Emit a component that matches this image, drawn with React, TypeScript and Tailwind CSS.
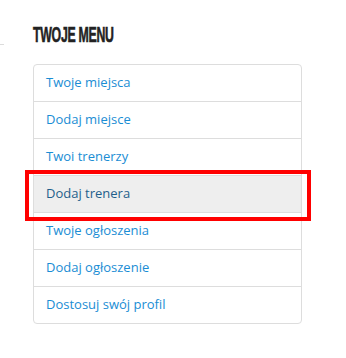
const items = [
  'Twoje miejsca',
  'Dodaj miejsce',
  'Twoi trenerzy',
  'Dodaj trenera',
  'Twoje ogłoszenia',
  'Dodaj ogłoszenie',
  'Dostosuj swój profil',
];

const ACTIVE = 'Dodaj trenera';

export default function App() {
  return (
    <div className="flex h-[358px] w-[346px] bg-white">
      {/* leftover rule from the neighbouring column */}
      <div className="w-[4px] pt-[44px]">
        <div className="h-px bg-[#dcdcdc]" />
      </div>

      <div className="ml-[29px] w-[269px] pt-[25px]">
        <h2
          className="h-[19px] origin-left scale-x-[0.56] whitespace-nowrap text-[22px] leading-[20px] font-bold tracking-[-0.5px] text-[#222] [-webkit-text-stroke:0.6px_#222]"
          style={{ fontFamily: '"Liberation Sans", Arial, sans-serif' }}
        >
          TWOJE MENU
        </h2>

        <ul
          className="mt-[20px] rounded-[4px] border border-[#ddd] bg-white"
          style={{ fontFamily: '"Open Sans", sans-serif' }}
        >
          {items.map((item, i) => {
            const active = item === ACTIVE;
            return (
              <li
                key={item}
                className={`relative flex items-center pl-[12px] text-[13px] ${
                  i > 0 ? 'h-[37px] border-t border-[#ddd]' : 'h-[36px]'
                } ${active ? 'bg-[#eee] text-[#1f5f8b]' : 'text-[#1a8dd4]'}`}
              >
                {item}
                {active && (
                  <div className="pointer-events-none absolute -top-[6px] -right-[10px] -bottom-[9px] -left-[9px] border-4 border-[#f00]" />
                )}
              </li>
            );
          })}
        </ul>
      </div>
    </div>
  );
}
